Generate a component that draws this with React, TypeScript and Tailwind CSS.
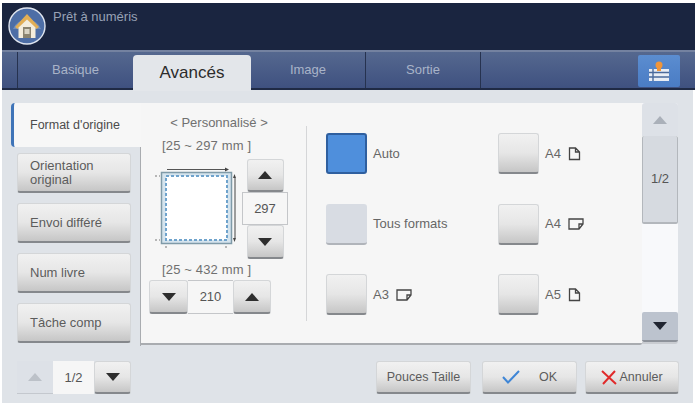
const btn = 'bg-linear-to-b from-[#f1f1f1] via-[#e6e6e6] to-[#c6c6c6] border border-[#d4d6d8] border-b-[#85888c] border-b-2 rounded-[3px]';

// small triangle used on every stepper
const Tri = ({ down, color = '#2e2e2e', w = 14, h = 8 }: { down?: boolean; color?: string; w?: number; h?: number }) => (
  <svg width={w} height={h} viewBox="0 0 14 8">
    <path d={down ? 'M0 0H14L7 8Z' : 'M7 0L14 8H0Z'} fill={color} />
  </svg>
);

const PortraitPage = () => (
  <svg width="13" height="14" viewBox="0 0 13 14" fill="none" stroke="#444" strokeWidth="1.3">
    <path d="M1.5 1H7.5L11.5 5V12.5H1.5ZM7.5 1V5H11.5" />
  </svg>
);

const LandscapePage = () => (
  <svg width="16" height="12" viewBox="0 0 16 12" fill="none" stroke="#444" strokeWidth="1.3">
    <path d="M1 1H15V6L11 11H1ZM15 6H11V11" />
  </svg>
);

const HomeIcon = () => (
  <svg width="38" height="38" viewBox="0 0 38 38">
    <circle cx="19" cy="19" r="18" fill="#4d6ea6" stroke="#dfe5ef" strokeWidth="1.4" />
    <path d="M5 22A15 15 0 0 1 33 22Z" fill="#6f8dbd" />
    <path d="M7 20L19 7L31 20L28.5 22L19 13L9.5 22Z" fill="#e2ae55" />
    <path d="M10.5 20.5L19 12.5L27.5 20.5V31H10.5Z" fill="#f4eddc" />
    <path d="M15 20H23V31H15Z" fill="#8b8470" />
    <path d="M16.5 22H21.5V27H16.5Z" fill="#d9d4c4" />
  </svg>
);

const SizeDiagram = () => (
  <svg width="84" height="88" viewBox="0 0 84 88" className="shrink-0">
    <rect x="9.5" y="9.5" width="70" height="71" fill="#d5e4ee" stroke="#7f9aa8" strokeWidth="1.5" />
    <rect x="14" y="13" width="61" height="64" fill="#fff" />
    <rect x="14" y="13" width="61" height="64" fill="none" stroke="#6fa3cc" strokeWidth="2" strokeDasharray="3 2" />
    <path d="M15 6.5H75" stroke="#555" strokeWidth="1" />
    <path d="M83 15V75" stroke="#444" strokeWidth="1" />
    <path d="M3 13H8M3 77H8M14 83V87M74 83V87" stroke="#777" strokeWidth="1" strokeDasharray="2 2" />
    <path d="M73 4.5L77 6.5L73 8.5ZM81 15H84L82.5 11ZM81 75H84L82.5 79Z" fill="#444" />
  </svg>
);

const Option = ({ label, icon, active, plain }: { label: string; icon?: React.ReactNode; active?: boolean; plain?: boolean }) => (
  <div className="flex items-center h-[41px]">
    <div
      className={
        active
          ? 'w-[41px] h-[41px] rounded-[3px] bg-[#4f8fdc] border-2 border-[#2f5f9f]'
          : plain
            ? 'w-[41px] h-[41px] rounded-[3px] bg-[#d8dce3] border-b-2 border-[#b0b4ba]'
            : `w-[41px] h-[41px] ${btn}`
      }
    />
    <span className="ml-[6px] text-[13px] text-[#666]">{label}</span>
    {icon && <span className="ml-[7px] flex items-center">{icon}</span>}
  </div>
);

const SideButton = ({ children }: { children: React.ReactNode }) => (
  <div className={`w-[114px] h-[40px] flex items-center pl-[12px] text-[13px] leading-[14px] text-[#5c5c5c] ${btn}`}>
    {children}
  </div>
);

const BottomButton = ({ children, className }: { children: React.ReactNode; className?: string }) => (
  <div className={`h-[33px] flex items-center justify-center text-[12.5px] text-[#5c5c5c] ${btn} ${className}`}>
    {children}
  </div>
);

export default function App() {
  return (
    <div className="w-[695px] h-[403px] overflow-hidden bg-white pt-[3px] flex flex-col font-['Liberation_Sans',sans-serif]">
      {/* Header */}
      <div className="h-[47px] bg-[#1a2540] flex items-start pl-[6px] pt-[4px] ml-[2px]">
        <HomeIcon />
        <span className="ml-[7px] mt-[2px] text-[13px] leading-[15px] text-[#98a2b5]">Prêt à numéris</span>
      </div>

      {/* Tabs */}
      <div className="h-[40px] ml-[2px] pl-[15px] flex bg-linear-to-b from-[#55688f] to-[#3f5180] border-t-2 border-[#7482a0] border-b-2 border-b-[#1f2a45]">
        <div className="w-[116px] border-l border-[#26324f] flex items-center justify-center text-[13px] text-[#a9b4c8]">Basique</div>
        <div className="w-[118px] h-[36px] mt-[3px] rounded-t-[4px] bg-[#e3e6ea] flex items-center justify-center text-[17px] text-[#2c2c2c] z-10">Avancés</div>
        <div className="w-[115px] border-r border-[#26324f] flex items-center justify-center text-[13px] text-[#a9b4c8]">Image</div>
        <div className="w-[115px] border-r border-[#26324f] flex items-center justify-center text-[13px] text-[#a9b4c8]">Sortie</div>
        <div className="ml-auto mr-[15px] mt-[3px] w-[42px] h-[32px] rounded-[2px] bg-linear-to-b from-[#5b8dd0] to-[#4a7cc4] flex items-center justify-center">
          <svg width="24" height="22" viewBox="0 0 24 22">
            <path d="M2 9H22V21H2Z" fill="#e8edf5" />
            <path d="M2 12.5H22M2 17H22M6 9V21" stroke="#4a6a9c" strokeWidth="1.4" />
            <circle cx="12" cy="5" r="3.5" fill="#f0953a" />
            <path d="M10 7H14V11H10Z" fill="#f0953a" />
          </svg>
        </div>
      </div>

      {/* Body */}
      <div className="flex-1 ml-[2px] mr-[2px] bg-[#dfe3e8] flex flex-col pl-[9px] pt-[13px]">
        <div className="flex h-[243px]">
          {/* Side menu */}
          <div className="w-[130px] shrink-0 flex flex-col">
            <div className="h-[44px] shrink-0 bg-[#f7f7f7] border-l-[3px] border-[#3f74b8] rounded-l-[4px] flex items-center pl-[16px] text-[12.5px] text-[#4c4c4c]">
              Format d'origine
            </div>
            <div className="pl-[6px] pt-[6px] flex flex-col gap-[10px] border-r border-[#a9acb0] h-full">
              <SideButton>Orientation<br />original</SideButton>
              <SideButton>Envoi différé</SideButton>
              <SideButton>Num livre</SideButton>
              <SideButton>Tâche comp</SideButton>
            </div>
          </div>

          {/* Panel */}
          <div className="w-[501px] shrink-0 h-[242px] bg-[#f6f6f6] border-b-2 border-[#a9acb0] rounded-br-[2px] flex">
            <div className="w-[165px] shrink-0 flex flex-col pt-[11px]">
              <div className="text-center text-[13px] leading-[18px] text-[#707070] pl-[2px] pr-[11px]">&lt; Personnalisé &gt;</div>
              <div className="pl-[21px] mt-[7px] text-[13px] leading-[14px] text-[#707070] tracking-[0.15px]">[25 ~ 297 mm ]</div>
              <div className="flex pl-[11px] mt-[6px]">
                <div className="pt-[4px]"><SizeDiagram /></div>
                <div className="ml-[6px] flex flex-col items-center w-[46px]">
                  <div className={`w-[37px] h-[33px] flex items-center justify-center ${btn}`}><Tri /></div>
                  <div className="w-[46px] h-[33px] bg-[#f6f6f6] border border-[#c4c6c9] flex items-center justify-center text-[13px] text-[#555]">297</div>
                  <div className={`w-[37px] h-[34px] flex items-center justify-center ${btn}`}><Tri down /></div>
                </div>
              </div>
              <div className="pl-[21px] mt-[4px] text-[13px] leading-[14px] text-[#707070] tracking-[0.15px]">[25 ~ 432 mm ]</div>
              <div className="flex ml-[8px] mt-[3px] h-[34px]">
                <div className={`w-[39px] flex items-center justify-center ${btn}`}><Tri down /></div>
                <div className="w-[45px] bg-[#f6f6f6] border-y border-[#c4c6c9] flex items-center justify-center text-[13px] text-[#555]">210</div>
                <div className={`w-[38px] flex items-center justify-center ${btn}`}><Tri /></div>
              </div>
            </div>
            <div className="w-px bg-[#d5d6d8] mt-[23px] h-[195px]" />
            <div className="pl-[19px] pt-[30px] grid grid-cols-[172px_130px] grid-rows-[41px_41px_41px] gap-y-[29.5px]">
              <Option label="Auto" active />
              <Option label="A4" icon={<PortraitPage />} />
              <Option label="Tous formats" plain />
              <Option label="A4" icon={<LandscapePage />} />
              <Option label="A3" icon={<LandscapePage />} />
              <Option label="A5" icon={<PortraitPage />} />
            </div>
          </div>

          {/* Scrollbar */}
          <div className="w-[36px] h-[241px] shrink-0 bg-[#f8f9fb] border-b-2 border-[#c9ccd1] rounded-r-[3px] flex flex-col">
            <div className="h-[33px] shrink-0 bg-[#dde1e7] rounded-t-[3px] flex items-center justify-center"><Tri color="#aab0b9" /></div>
            <div className="h-[88px] shrink-0 bg-[#d6dae0] border-b-2 border-x border-[#b3b7bc] rounded-[2px] flex items-center justify-center text-[13px] text-[#555]">1/2</div>
            <div className="h-[88px] shrink-0" />
            <div className="h-[30px] shrink-0 bg-[#bcc3ce] border-b-2 border-[#8e939b] rounded-[2px] flex items-center justify-center"><Tri down color="#1f2430" /></div>
          </div>
        </div>

        {/* Bottom bar */}
        <div className="flex items-start mt-[15px] pl-[6px]">
          <div className="w-[114px] h-[33px] flex">
            <div className="w-[36px] bg-[#dde1e7] border-b border-[#c4c8ce] flex items-center justify-center"><Tri color="#bcc1c8" /></div>
            <div className="w-[41px] bg-[#f6f6f6] flex items-center justify-center text-[13px] text-[#555]">1/2</div>
            <div className={`w-[37px] flex items-center justify-center ${btn}`}><Tri down /></div>
          </div>
          <BottomButton className="w-[95px] ml-[245px]">Pouces Taille</BottomButton>
          <BottomButton className="w-[95px] ml-[11px] gap-[19px]">
            <svg width="18" height="14" viewBox="0 0 18 14" fill="none" stroke="#3f86d6" strokeWidth="2">
              <path d="M1 7L6 12.5L17 1" />
            </svg>
            <span>OK</span>
          </BottomButton>
          <BottomButton className="w-[94px] ml-[8px] gap-[2px]">
            <svg width="16" height="15" viewBox="0 0 16 15" fill="none" stroke="#e02a2a" strokeWidth="2">
              <path d="M1 1L15 14M14 1L2 14" />
            </svg>
            <span>Annuler</span>
          </BottomButton>
        </div>
      </div>
    </div>
  );
}
